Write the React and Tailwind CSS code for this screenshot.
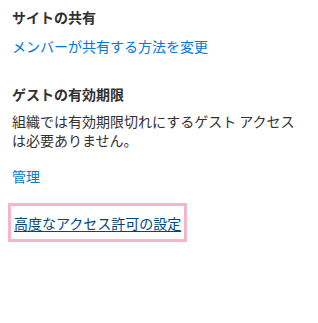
import React from "react";

// Sharing settings panel (SharePoint-style side pane)
export default function App() {
  const font = { fontFamily: '"Noto Sans CJK JP", "Noto Sans", sans-serif' };

  return (
    <div className="w-[318px] h-[323px] bg-white text-[#323130] text-[14px] px-[12px] pt-[7px]" style={font}>
      <section>
        <h2 className="font-semibold leading-5">サイトの共有</h2>
        <a href="#" className="block mt-[9px] leading-5 text-[#0078d4]">
          メンバーが共有する方法を変更
        </a>
      </section>

      <section className="mt-[28px]">
        <h2 className="font-semibold leading-5">ゲストの有効期限</h2>
        <p className="mt-[8px] leading-[19px]">
          組織では有効期限切れにするゲスト アクセスは必要ありません。
        </p>
        <a href="#" className="block mt-[16px] leading-5 text-[#0078d4]">
          管理
        </a>
      </section>

      <div className="mt-[17px] -ml-[4px]">
        <a
          href="#"
          className="inline-block border-[3px] border-[#f4b6cd] px-[3px] pt-[7px] pb-[6px] leading-5 text-[#004578] underline underline-offset-2"
        >
          高度なアクセス許可の設定
        </a>
      </div>
    </div>
  );
}
